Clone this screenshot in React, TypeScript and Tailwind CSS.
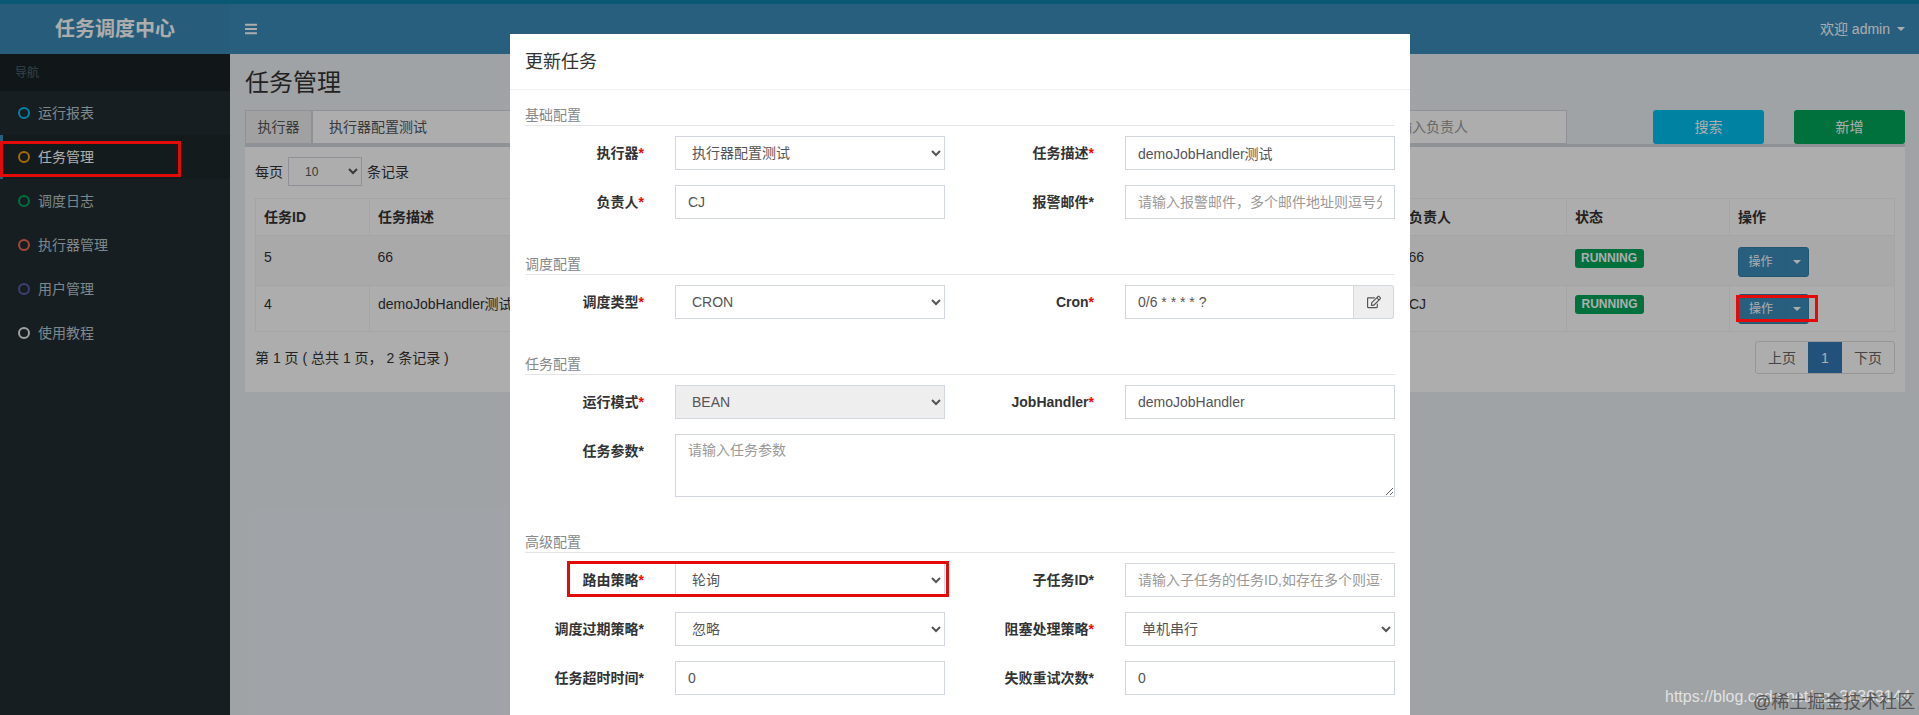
import type { ReactNode } from 'react';
import { FaBars, FaRegEdit } from 'react-icons/fa';

const menu = [
  { name: '运行报表', ring: 'border-[#00c0ef]' },
  { name: '任务管理', ring: 'border-[#f39c12]', active: true },
  { name: '调度日志', ring: 'border-[#00a65a]' },
  { name: '执行器管理', ring: 'border-[#f56954]' },
  { name: '用户管理', ring: 'border-[#605ca8]' },
  { name: '使用教程', ring: 'border-[#eeeeee]' },
];

const controlClass =
  'w-full h-[34px] border border-[#d2d6de] px-3 text-sm text-[#555] placeholder:text-[#999] outline-none';
const inputClass = `${controlClass} bg-white`;

function Caret({ className = '' }: { className?: string }) {
  return (
    <span
      className={`inline-block w-0 h-0 border-x-4 border-t-4 border-x-transparent border-t-white ${className}`}
    />
  );
}

function Field({ label, star = 'red', children }: { label: string; star?: 'red' | 'dark'; children: ReactNode }) {
  return (
    <>
      <label className="pr-[31px] pt-[7px] text-right text-sm leading-5 font-bold text-[#333]">
        {label}
        <span className={star === 'red' ? 'text-[#ff0000]' : 'text-[#333]'}>*</span>
      </label>
      {children}
    </>
  );
}

function Select({ value, disabled = false }: { value: string; disabled?: boolean }) {
  return (
    <select
      defaultValue={value}
      disabled={disabled}
      className={`${controlClass} ${disabled ? 'bg-[#eeeeee] opacity-100' : 'bg-white'}`}
    >
      <option>{value}</option>
    </select>
  );
}

function Section({ title, children }: { title: string; children: ReactNode }) {
  return (
    <section className="mb-[35px]">
      <h4 className="h-[21px] border-b border-[#e5e5e5] text-sm leading-5 text-[#888]">{title}</h4>
      <div className="mt-[10px] grid grid-cols-[150px_270px_180px_270px] gap-y-[15px]">{children}</div>
    </section>
  );
}

function ActionButton() {
  return (
    <div className="flex h-[30px] w-[71px] rounded-[3px] border border-[#367fa9] bg-[#3c8dbc] text-xs text-white">
      <span className="flex w-[46px] items-center pl-[10px]">操作</span>
      <span className="flex flex-1 items-center justify-center border-l border-[#3a88b5]">
        <Caret />
      </span>
    </div>
  );
}

function Running() {
  return (
    <span className="block h-[19px] w-[69px] rounded-[3px] bg-[#00a65a] text-center text-xs leading-[19px] font-bold text-white">
      RUNNING
    </span>
  );
}

function Page() {
  return (
    <div className="flex h-full flex-col">
      <div className="h-1 bg-[#0f84ac]" />
      <header className="flex h-[50px] bg-[#3c8dbc] text-white">
        <div className="flex w-[230px] items-center justify-center bg-[#3a89b6] text-xl font-bold">任务调度中心</div>
        <div className="flex flex-1 items-center justify-between pr-[14px] pl-[15px]">
          <FaBars className="h-[14px] w-[12px]" />
          <div className="flex items-center gap-[7px] text-sm">
            欢迎 admin
            <Caret />
          </div>
        </div>
      </header>

      <div className="flex flex-1">
        <aside className="w-[230px] bg-[#222d32] text-sm text-[#b8c7ce]">
          <div className="flex h-[37px] items-center bg-[#1a2226] pl-[15px] text-xs text-[#4b646f]">导航</div>
          {menu.map((item) => (
            <div
              key={item.name}
              className={`flex h-[44px] items-center gap-[8px] border-l-[3px] pl-[15px] ${
                item.active ? 'border-[#3c8dbc] bg-[#1e282c] text-white' : 'border-transparent'
              }`}
            >
              <span className={`h-3 w-3 rounded-full border-[2.5px] ${item.ring}`} />
              {item.name}
            </div>
          ))}
        </aside>

        <main className="flex-1 bg-[#ecf0f5] pt-[13px] pr-[14px] pl-[15px] text-sm text-[#333]">
          <h1 className="text-2xl leading-8">任务管理</h1>

          <div className="mt-[11px] flex h-[34px]">
            <div className="flex flex-1">
              <span className="flex w-[67px] items-center justify-center border border-[#d2d6de] bg-[#eeeeee] text-[#555]">
                执行器
              </span>
              <div className="w-[330px]">
                <Select value="执行器配置测试" />
              </div>
            </div>
            <input className={`${inputClass} !w-[196px]`} placeholder="请输入负责人" />
            <button className="ml-[86px] w-[111px] rounded-[3px] bg-[#00c0ef] text-white">搜索</button>
            <button className="ml-[30px] w-[111px] rounded-[3px] bg-[#00a65a] text-white">新增</button>
          </div>

          <div className="border-t-[3px] border-[#d2d6de] bg-white px-[10px] pt-[10px] pb-[18px]">
            <div className="flex items-center gap-[5px] text-[#333]">
              每页
              <select className="h-[29px] w-[74px] border border-[#d2d6de] bg-white px-3 text-xs text-[#555]">
                <option>10</option>
              </select>
              条记录
            </div>

            <table className="mt-[12px] w-full table-fixed border-collapse border border-[#f4f4f4] text-left">
              <colgroup>
                <col className="w-[114px]" />
                <col />
                <col className="w-[166px]" />
                <col className="w-[163px]" />
                <col className="w-[165px]" />
              </colgroup>
              <thead>
                <tr className="h-[37px] font-bold">
                  {['任务ID', '任务描述', '负责人', '状态', '操作'].map((h) => (
                    <th key={h} className="border border-[#f4f4f4] px-2 font-bold">
                      {h}
                    </th>
                  ))}
                </tr>
              </thead>
              <tbody>
                <tr className="h-[50px] bg-[#f9f9f9] align-top">
                  <td className="px-2 pt-[11px]">5</td>
                  <td className="px-2 pt-[11px]">66</td>
                  <td className="px-2 pt-[11px]">66</td>
                  <td className="px-2 pt-[13px]"><Running /></td>
                  <td className="px-2 pt-[11px]"><ActionButton /></td>
                </tr>
                <tr className="h-[46px] border-t border-[#f4f4f4] align-top">
                  <td className="px-2 pt-[8px]">4</td>
                  <td className="border-x border-[#f4f4f4] px-2 pt-[8px]">demoJobHandler测试</td>
                  <td className="px-2 pt-[8px]">CJ</td>
                  <td className="border-x border-[#f4f4f4] px-2 pt-[9px]"><Running /></td>
                  <td className="px-2 pt-[8px]"><ActionButton /></td>
                </tr>
              </tbody>
            </table>

            <div className="mt-[9px] flex h-[33px] items-center justify-between">
              <span>{'第 1 页 ( 总共 1 页\uFF0C 2 条记录 )'}</span>
              <div className="flex h-[33px] rounded-[3px] border border-[#dddddd] text-[#666]">
                <span className="flex w-[52px] items-center justify-center">上页</span>
                <span className="flex w-[34px] items-center justify-center bg-[#337ab7] text-white">1</span>
                <span className="flex w-[52px] items-center justify-center">下页</span>
              </div>
            </div>
          </div>
        </main>
      </div>
    </div>
  );
}

function Modal() {
  return (
    <div className="absolute top-[34px] left-[510px] h-[681px] w-[900px] overflow-hidden bg-white">
      <div className="flex h-[56px] items-center border-b border-[#f0f0f0] pl-[15px] text-lg text-[#333]">更新任务</div>
      <form className="px-[15px] pt-[15px]">
        <Section title="基础配置">
          <Field label="执行器"><Select value="执行器配置测试" /></Field>
          <Field label="任务描述"><input className={inputClass} defaultValue="demoJobHandler测试" /></Field>
          <Field label="负责人"><input className={inputClass} defaultValue="CJ" /></Field>
          <Field label="报警邮件" star="dark">
            <input className={inputClass} placeholder={'请输入报警邮件\uFF0C多个邮件地址则逗号分隔'} />
          </Field>
        </Section>

        <Section title="调度配置">
          <Field label="调度类型"><Select value="CRON" /></Field>
          <Field label="Cron">
            <div className="flex">
              <input className={`${inputClass} !w-[229px]`} defaultValue="0/6 * * * * ?" />
              <span className="flex h-[34px] w-[40px] items-center justify-center rounded-r-[3px] border border-l-0 border-[#d2d6de] bg-[#eeeeee] text-[#555]">
                <FaRegEdit className="h-[14px] w-[14px]" />
              </span>
            </div>
          </Field>
        </Section>

        <Section title="任务配置">
          <Field label="运行模式"><Select value="BEAN" disabled /></Field>
          <Field label="JobHandler"><input className={inputClass} defaultValue="demoJobHandler" /></Field>
          <Field label="任务参数" star="dark">
            <textarea
              className="col-span-3 block h-[63px] w-full border border-[#d2d6de] px-3 py-[5px] text-sm text-[#555] placeholder:text-[#999] outline-none"
              placeholder="请输入任务参数"
            />
          </Field>
        </Section>

        <Section title="高级配置">
          <Field label="路由策略"><Select value="轮询" /></Field>
          <Field label="子任务ID" star="dark">
            <input className={inputClass} placeholder="请输入子任务的任务ID,如存在多个则逗号分隔" />
          </Field>
          <Field label="调度过期策略" star="dark"><Select value="忽略" /></Field>
          <Field label="阻塞处理策略"><Select value="单机串行" /></Field>
          <Field label="任务超时时间" star="dark"><input className={inputClass} defaultValue="0" /></Field>
          <Field label="失败重试次数" star="dark"><input className={inputClass} defaultValue="0" /></Field>
        </Section>
      </form>
    </div>
  );
}

export default function App() {
  return (
    <div className="relative h-[715px] w-full overflow-hidden font-['Liberation_Sans','Noto_Sans_CJK_SC',sans-serif]">
      <Page />
      <div className="absolute inset-0 bg-black/[0.32]" />
      <Modal />

      {/* red marks drawn over the screenshot */}
      <div className="absolute top-[141px] left-0 h-[36px] w-[181px] border-[3px] border-[#e50a0a]" />
      <div className="absolute top-[295px] left-[1736px] h-[27px] w-[82px] border-[3px] border-[#e50a0a]" />
      <div className="absolute top-[561px] left-[567px] h-[36px] w-[382px] border-[3px] border-[#e50a0a]" />

      {/* watermarks */}
      <div className="absolute top-[685px] left-[1665px] text-base text-white/70">https://blog.csdn.net/qq_36363144</div>
      <div className="absolute top-[688px] left-[1753px] text-lg text-[#555]">@稀土掘金技术社区</div>
    </div>
  );
}
